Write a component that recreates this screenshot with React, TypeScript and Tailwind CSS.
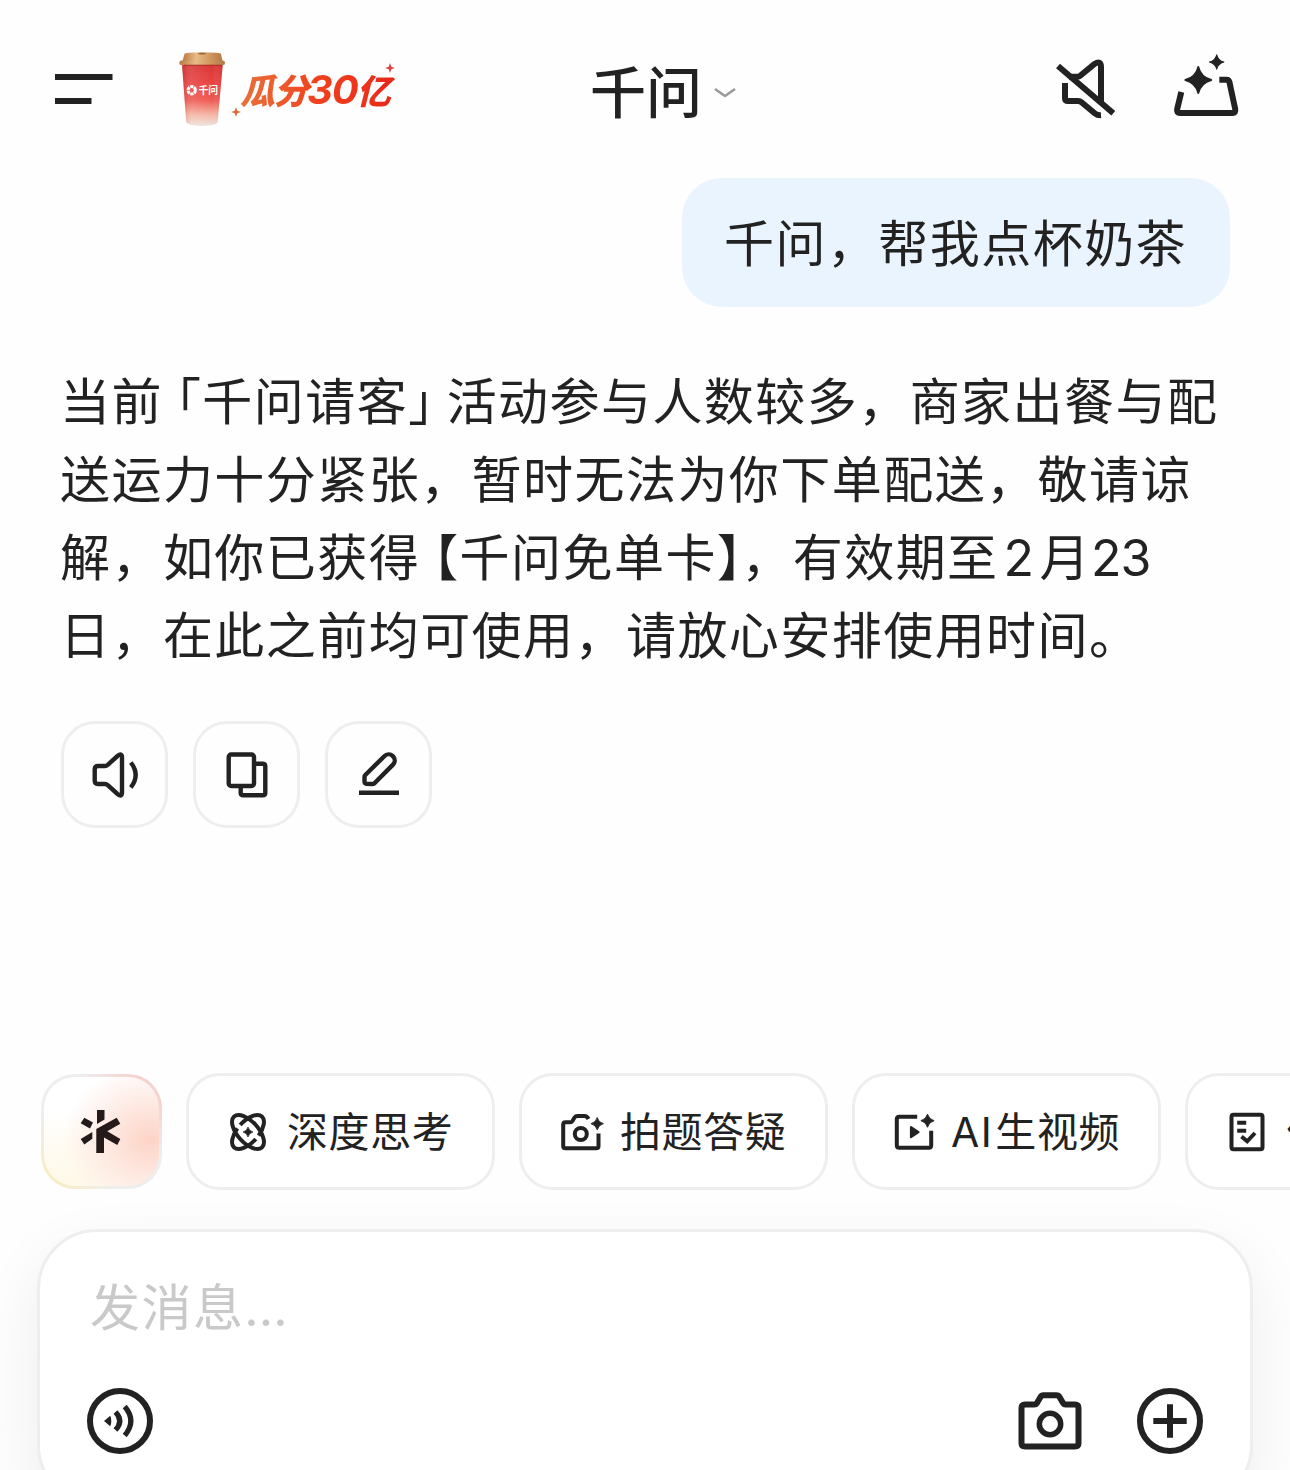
import type { ReactNode } from "react";

const INK = "#222222";

function Sparkle({ cx, cy, r }: { cx: number; cy: number; r: number }) {
  const k = r * 0.2;
  return (
    <path
      transform={`translate(${cx} ${cy})`}
      d={`M0 ${-r} Q${k} ${-k} ${r} 0 Q${k} ${k} 0 ${r} Q${-k} ${k} ${-r} 0 Q${-k} ${-k} 0 ${-r}Z`}
      fill={INK}
      stroke={INK}
      strokeWidth={r * 0.14}
      strokeLinejoin="round"
    />
  );
}

function Icon({ size, stroke, children }: { size: number; stroke: number; children: ReactNode }) {
  return (
    <svg
      width={size}
      height={size}
      viewBox={`0 0 ${size} ${size}`}
      fill="none"
      stroke={INK}
      strokeWidth={stroke}
      className="shrink-0"
    >
      {children}
    </svg>
  );
}

function Cup() {
  return (
    <svg width="54" height="82" viewBox="0 0 54 82" className="shrink-0">
      <defs>
        <linearGradient id="cup" x1="0" y1="0" x2="0" y2="1">
          <stop offset="0" stopColor="#d93536" />
          <stop offset="0.3" stopColor="#e84341" />
          <stop offset="0.58" stopColor="#ee5a52" />
          <stop offset="0.82" stopColor="#f6b7a6" />
          <stop offset="1" stopColor="#eee3dd" />
        </linearGradient>
        <linearGradient id="shade" x1="0" y1="0" x2="1" y2="0">
          <stop offset="0" stopColor="#a01818" stopOpacity="0.25" />
          <stop offset="0.25" stopColor="#fff" stopOpacity="0.1" />
          <stop offset="0.75" stopColor="#fff" stopOpacity="0" />
          <stop offset="1" stopColor="#a01818" stopOpacity="0.22" />
        </linearGradient>
        <linearGradient id="lid" x1="0" y1="0" x2="1" y2="0">
          <stop offset="0" stopColor="#b9783f" />
          <stop offset="0.35" stopColor="#e8bb88" />
          <stop offset="0.7" stopColor="#cf955c" />
          <stop offset="1" stopColor="#b57a45" />
        </linearGradient>
      </defs>
      <path d="M6 16H46.8L41.6 74Q41 77.500 26 78Q11 77.500 10.200 74Z" fill="url(#cup)" />
      <path d="M6 16H46.8L41.6 74Q41 77.500 26 78Q11 77.500 10.200 74Z" fill="url(#shade)" />
      <path d="M8.500 6Q9 4.500 26 4.300Q44 4.500 45 6L46.500 13H6.500Z" fill="url(#lid)" />
      <rect x="3.300" y="12.500" width="45.700" height="4.600" rx="2.200" fill="url(#lid)" />
      <path d="M8 17.200H46" stroke="#9c2b22" strokeWidth="0.8" />
      <ellipse cx="26" cy="5.600" rx="4" ry="0.900" fill="#9a6535" />
      <circle cx="15.700" cy="42.200" r="3.700" fill="none" stroke="#fff" strokeWidth="3" strokeDasharray="3.2 0.670" />
      <text
        x="22.400"
        y="45.800"
        fill="#fff"
        fontSize="9.800"
        fontWeight="700"
        fontFamily="'Noto Sans CJK SC', sans-serif"
      >
        千问
      </text>
    </svg>
  );
}

function Campaign() {
  return (
    <div className="flex items-center">
      <Cup />
      <div className="relative ml-2.5 flex h-[54px] items-center">
        <span className="flex items-baseline bg-linear-to-r from-[#e8703a] via-[#f0401c] to-[#e8261a] bg-clip-text pr-2 text-[35px] leading-[54px] font-black tracking-[-1.5px] whitespace-nowrap text-transparent italic">
          瓜分
          <span className="font-['Inter',sans-serif] text-[40px] font-bold tracking-[-1px]">30</span>
          <span className="-ml-px text-[34px]">亿</span>
        </span>
        <svg width="10" height="10" viewBox="0 0 10 10" className="absolute -bottom-[1px] -left-[9px]">
          <path d="M5 0 6.300 3.700 10 5 6.300 6.300 5 10 3.700 6.300 0 5 3.700 3.700Z" fill="#e06a35" />
        </svg>
        <svg width="10" height="10" viewBox="0 0 10 10" className="absolute top-[1px] left-[145px]">
          <path d="M5 0 6.300 3.700 10 5 6.300 6.300 5 10 3.700 6.300 0 5 3.700 3.700Z" fill="#dd4545" />
        </svg>
      </div>
    </div>
  );
}

function Header() {
  return (
    <header className="grid h-[178px] grid-cols-[590px_1fr_auto] items-center pr-12">
      <div className="flex items-center pl-[55px]">
        <svg width="58" height="30" viewBox="0 0 58 30" className="mr-[63px]">
          <path d="M0 0H57.500V6H0ZM0 24H36.500V30H0Z" fill={INK} />
        </svg>
        <Campaign />
      </div>
      <div className="flex items-center">
        <h1 className="text-[56px] leading-[80px] font-medium">千问</h1>
        <svg width="22" height="12" viewBox="0 0 22 12" className="mt-[7px] ml-3">
          <path d="M1 2 11 9 21 2" fill="none" stroke="#999" strokeWidth="2.500" />
        </svg>
      </div>
      <div className="mt-px flex items-center gap-[50px]">
        <Icon size={68} stroke={6}>
          <path d="M6 10 61.300 57.300" />
          <path d="M17 20.700H25.500Q27 20.700 28.200 19.700L42.500 8Q49 4 49 11V46" />
          <path d="M13 27V42Q13 45 16 45H26Q28 45 29.500 46.300L43 57.500Q45.500 59.500 49 59.300" />
        </Icon>
        <div className="-mt-2">
          <Icon size={72} stroke={6}>
            <path d="M11.300 42 7.200 59Q6.300 63 10 63H62.500Q66 63 65.200 59L59.500 32.500Q59 29.700 56.500 29.700H49.300" />
            <Sparkle cx={28.300} cy={30} r={13} />
            <Sparkle cx={46.700} cy={12} r={7.200} />
          </Icon>
        </div>
      </div>
    </header>
  );
}

function Action({ children }: { children: ReactNode }) {
  return (
    <button className="flex size-[107px] items-center justify-center rounded-[34px] border-3 border-[#eeeeee]">
      <Icon size={56} stroke={4.400}>
        {children}
      </Icon>
    </button>
  );
}

function Chip({ label, children }: { label: ReactNode; children: ReactNode }) {
  return (
    <button className="flex h-[117px] w-[309px] shrink-0 items-center gap-[15px] rounded-[34px] border-3 border-[#eeeeee] bg-white pl-[35px] text-[41px] tracking-[0.6px] whitespace-nowrap">
      <Icon size={48} stroke={4}>
        {children}
      </Icon>
      <span className="-mt-1.5 block h-[60px] leading-[60px]">{label}</span>
    </button>
  );
}

// Spark shortcut: warm glow fill with a matching gradient rim
function SparkChip() {
  return (
    <button className="mt-px flex h-[115px] w-[121px] shrink-0 rounded-[34px] bg-[linear-gradient(45deg,#faecc2_6%,#eeeeee_32%,#eeeeee_65%,#f5d2cd_88%)] p-[3px]">
      <span className="flex size-full items-center justify-center rounded-[31px] bg-[radial-gradient(ellipse_75%_70%_at_92%_58%,#fdd3c5_0%,#fddfd5cc_40%,#ffffff00_100%),radial-gradient(ellipse_80%_70%_at_15%_100%,#fff8e6_0%,#ffffff00_100%)] bg-white pr-px">
        <svg width="48" height="48" viewBox="0 0 48 48" fill="#231a19">
          <path d="M7.300 9.700 16 14.500 13 20.500 3.700 15.300Z" />
          <path d="M3.700 31 15.300 24V30.800L7.300 36.500Z" />
          <path d="M20 2H27.500V11.500L20 16Z" />
          <path d="M19.300 21 39.700 9.700 43.300 15.800 30.300 23.300 43.300 31 40.300 37 27 29.500V45H19.300Z" />
        </svg>
      </span>
    </button>
  );
}

function Composer() {
  return (
    <section className="mx-[37px] mt-[39px] h-[276px] rounded-[60px] border-3 border-[#eeeeee] bg-white px-[44px] shadow-[0_24px_64px_rgba(0,0,0,0.07)]">
      <p className="mt-[33px] ml-1.5 h-[78px] text-[50px] leading-[78px] tracking-[1.45px] text-[#c9c9c9]">
        发消息<span className="font-['Inter',sans-serif] tracking-normal">...</span>
      </p>
      <div className="mt-[42px] flex items-center">
        <Icon size={72} stroke={6}>
          <circle cx="36" cy="36" r="30" />
          <path d="M20 36 26.200 30.700Q28.500 36 26.200 41.300Z" fill={INK} stroke="none" />
          <path d="M31.500 27Q40 36 31.500 45M40.700 21.500Q53 36 40.700 50.500" strokeWidth="5.200" />
        </Icon>
        <div className="ml-auto flex gap-12">
          <Icon size={72} stroke={6}>
            <path d="M11 19.500H20.500Q22 19.500 23 18L26.500 12Q27.500 10.300 29.500 10.300H42.500Q44.500 10.300 45.500 12L49 18Q50 19.500 51.500 19.500H61Q64.500 19.500 64.500 23V58Q64.500 61.500 61 61.500H11Q7.500 61.500 7.500 58V23Q7.500 19.500 11 19.500Z" />
            <circle cx="36" cy="39" r="10.700" strokeWidth="5.500" />
          </Icon>
          <Icon size={72} stroke={6}>
            <circle cx="36" cy="36" r="30" />
            <path d="M36 19.300V52.700M19.300 36H52.700" />
          </Icon>
        </div>
      </div>
    </section>
  );
}

export default function App() {
  return (
    <div className="h-[1470px] w-[1290px] overflow-hidden bg-[#fefefe] font-['Noto_Sans_CJK_SC',sans-serif] text-[#222222]">
      <Header />

      <main className="px-[60px]">
        <div className="ml-auto flex h-[129px] w-[548px] items-center rounded-[40px] bg-[#e9f4ff] pb-1 pl-[42px] text-[50px] tracking-[1.45px] whitespace-nowrap">
          千问，帮我点杯奶茶
        </div>

        <div className="mt-[52px] text-[50px] leading-[78px] tracking-[1.45px] whitespace-nowrap">
          <p className="h-[78px]">
            当前<span className="-ml-3">「</span>千问请客<span className="-mr-[13px]">」</span>活动参与人数较多，商家出餐与配
          </p>
          <p className="h-[78px]">送运力十分紧张，暂时无法为你下单配送，敬请谅</p>
          <p className="h-[78px]">
            解，如你已获得<span className="-ml-3">【</span>千问免单卡】<span className="-ml-0.5">，有效期至</span>
            <span className="ml-[5px] font-['Inter',sans-serif]">2</span>
            <span className="ml-1">月</span>
            <span className="font-['Inter',sans-serif] tracking-[-1px]">23</span>
          </p>
          <p className="h-[78px]">日，在此之前均可使用，请放心安排使用时间。</p>
        </div>

        <div className="mt-[50px] flex gap-[25px] pl-px">
          <Action>
            <path d="M11 19H18Q19.500 19 20.500 18L30.500 9Q35 5.500 35 10.500V45.500Q35 50.500 30.500 47L20.500 38Q19.500 37 18 37H11Q7.700 37 7.700 33.500V22.500Q7.700 19 11 19Z" />
            <path d="M43.800 15.500Q53.500 28 43.800 40.500" />
          </Action>
          <Action>
            <rect x="9.700" y="7.500" width="25.300" height="31.500" rx="2.500" />
            <path d="M36 16.700H43.800Q46.300 16.700 46.300 19.200V45.800Q46.300 48.300 43.800 48.300H24.200Q21.700 48.300 21.700 45.800V40" />
          </Action>
          <Action>
            <path d="M8 45.700H48" />
            <path d="M14.300 28 33.300 9.200A5.900 5.900 0 0 1 42 17.600L24 35.800Q23 37 21.500 37L15.500 36.700Q13.500 36.500 13.500 34.500V30Q13.500 28.800 14.300 28Z" />
          </Action>
        </div>
      </main>

      <nav className="mt-[245px] flex gap-6 pl-[41px]">
        <SparkChip />
        <Chip label="深度思考">
          <ellipse cx="24" cy="24" rx="20.800" ry="10.500" transform="rotate(48 24 24)" />
          <ellipse
            cx="24"
            cy="24"
            rx="20.800"
            ry="10.500"
            transform="rotate(-48 24 24)"
            pathLength="100"
            strokeDasharray="20.500 4.500 45.500 4.500 25"
          />
          <Sparkle cx={24} cy={24} r={5} />
        </Chip>
        <Chip label="拍题答疑">
          <path d="M31.500 11Q30 8 27.500 8H20.500Q18.500 8 17.500 9.500L15.500 13Q14.700 14.300 13 14.300H8.500Q6.200 14.300 6.200 16.600V38Q6.200 40.300 8.500 40.300H39.200Q41.500 40.300 41.500 38V25.500" />
          <circle cx="23.800" cy="26" r="6" />
          <Sparkle cx={40.200} cy={15.700} r={6.200} />
        </Chip>
        <Chip
          label={
            <>
              <span className="-ml-0.5 font-['Inter',sans-serif] tracking-[1.5px]">AI</span>
              <span className="ml-0.5">生视频</span>
            </>
          }
        >
          <path d="M27.200 8.700H9.300Q6.800 8.700 6.800 11.200V37.200Q6.800 39.700 9.300 39.700H38.700Q41.200 39.700 41.200 37.200V22.700" />
          <path d="M21 19.200V29.200L28.500 24.200Z" fill={INK} strokeWidth="2.200" strokeLinejoin="round" />
          <Sparkle cx={37.500} cy={12.700} r={6.600} />
        </Chip>
        <Chip label="作业批改">
          <rect x="8.500" y="6.700" width="31" height="34.600" rx="2" />
          <path d="M14.200 14.700H23.200M14.200 22.700H23.200M18.500 28.500 24.200 33.300 32 25" />
        </Chip>
      </nav>

      <Composer />
    </div>
  );
}
